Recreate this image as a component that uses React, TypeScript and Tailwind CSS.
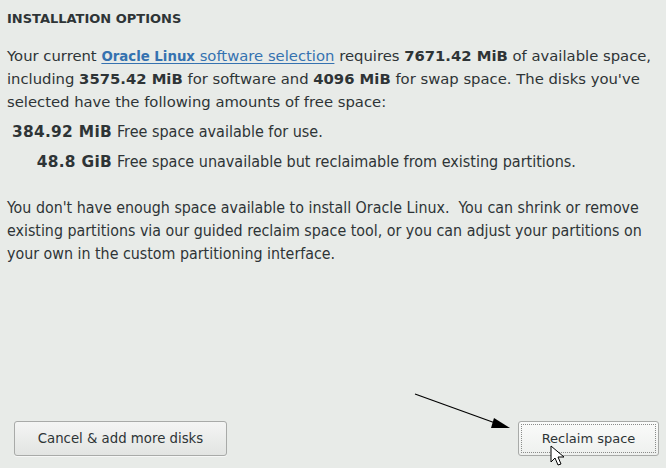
import React from "react";

export default function App() {
  return (
    <div className="relative w-[666px] h-[468px] bg-[#e8ebe8] text-[#2e3436] overflow-hidden flex flex-col font-['DejaVu_Sans',sans-serif]">
      <div className="px-[7px] pt-[10px] flex flex-col">
        <div className="text-[13px] font-bold leading-[18px]">INSTALLATION OPTIONS</div>
        <p className="mt-[16px] text-[14.8px] leading-[23px] whitespace-nowrap">
          Your current{" "}
          <span className="text-[#3572b0] underline underline-offset-2">
            <b className="[font-stretch:condensed]">Oracle Linux</b> software selection
          </span>{" "}
          requires <b>7671.42 MiB</b> of available space,
          <br />
          including <b>3575.42 MiB</b> for software and <b>4096 MiB</b> for swap space. The disks you've
          <br />
          selected have the following amounts of free space:
        </p>
        <div className="mt-[9px] grid grid-cols-[105px_1fr] gap-x-[5px] gap-y-[10px] text-[16px] leading-[20px] whitespace-nowrap [font-stretch:condensed]">
          <div className="text-right font-bold text-[15.4px] tracking-[0.3px] [font-stretch:normal]">384.92 MiB</div>
          <div>Free space available for use.</div>
          <div className="text-right font-bold text-[15.4px] tracking-[0.3px] [font-stretch:normal]">48.8 GiB</div>
          <div>Free space unavailable but reclaimable from existing partitions.</div>
        </div>
        <p className="mt-[24px] text-[15.85px] leading-[23px] whitespace-nowrap [font-stretch:condensed]">
          You don't have enough space available to install Oracle Linux.&nbsp; You can shrink or remove
          <br />
          existing partitions via our guided reclaim space tool, or you can adjust your partitions on
          <br />
          your own in the custom partitioning interface.
        </p>
      </div>
      <div className="mt-auto mb-[12px] pl-[14px] pr-[7px] flex justify-between items-end">
        <button className="w-[213px] h-[35px] rounded-[3px] border border-[#a8aaa8] bg-gradient-to-b from-[#f4f5f4] to-[#e2e4e2] text-[13.3px] text-[#2e3436] shadow-[0_1px_0_rgba(255,255,255,0.6)]">
          Cancel &amp; add more disks
        </button>
        <button className="w-[141px] h-[35px] rounded-[3px] border border-[#a8aaa8] bg-gradient-to-b from-[#fafbfa] to-[#eef0ee] p-[2px] text-[13px] text-[#2e3436]">
          <div className="w-full h-full border border-dotted border-[#8a8c8a] flex items-center justify-center">
            Reclaim space
          </div>
        </button>
      </div>
      <svg className="absolute left-0 top-0 pointer-events-none" width="666" height="468">
        <line x1="415" y1="394" x2="498" y2="424" stroke="#000" strokeWidth="1.2" />
        <polygon points="510,428 494,418 491,428" fill="#000" />
        <path
          d="M551,446 L551,462 L555,458 L558,465 L561,464 L558,457 L564,457 Z"
          fill="#fff"
          stroke="#000"
          strokeWidth="1"
        />
      </svg>
    </div>
  );
}
